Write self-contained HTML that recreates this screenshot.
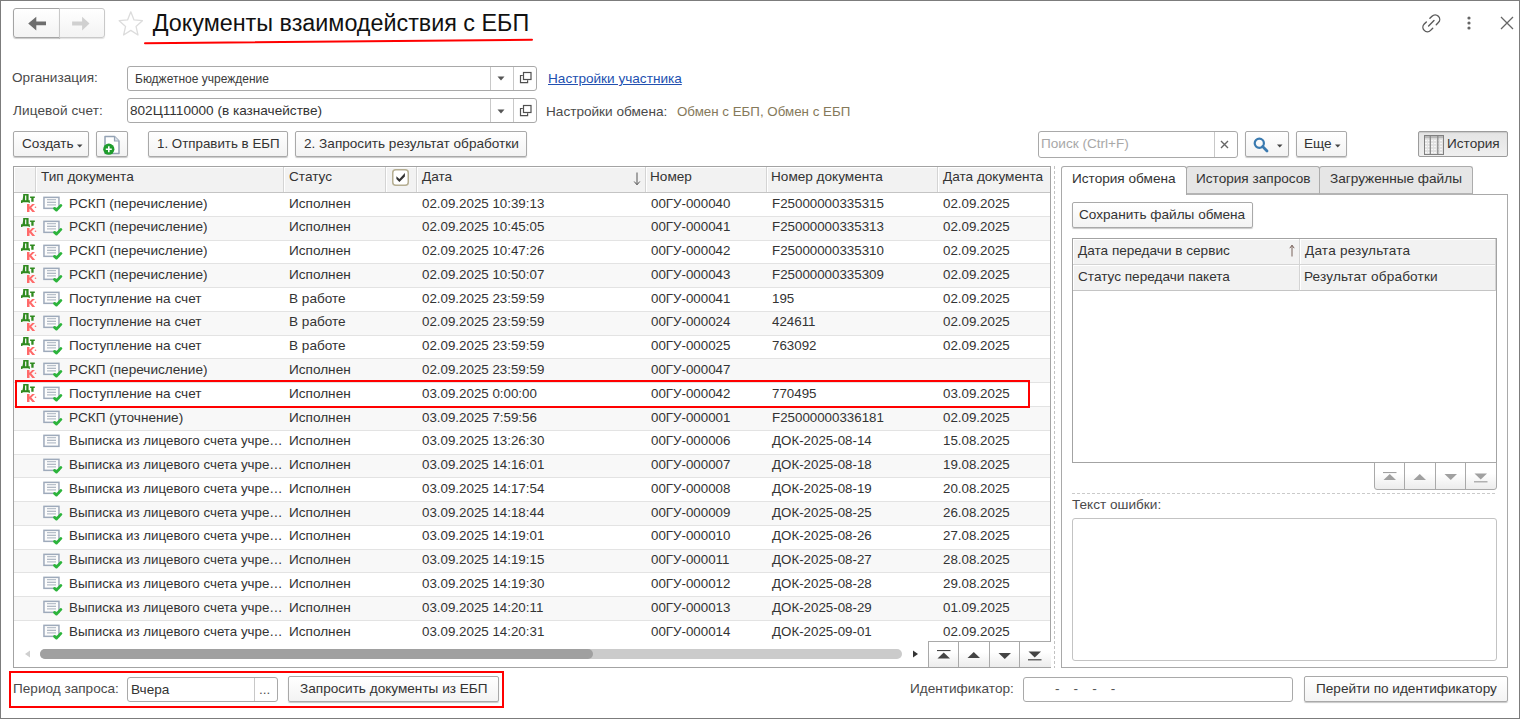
<!DOCTYPE html>
<html><head><meta charset="utf-8">
<style>
*{box-sizing:border-box;margin:0;padding:0}
html,body{width:1520px;height:719px;overflow:hidden;background:#fff}
body{position:relative;font-family:"Liberation Sans",sans-serif;font-size:13.6px;color:#333}
.n{font-size:13.33px}
.a{position:absolute}
.t{position:absolute;white-space:nowrap;line-height:16px}
.win{position:absolute;left:0;top:0;width:1520px;height:719px;border:1px solid #7c7c7c}
.btn{position:absolute;border:1px solid #a9a9a9;border-radius:2px;background:linear-gradient(#ffffff,#f3f3f3);box-shadow:0 1px 1px rgba(0,0,0,.22);white-space:nowrap;color:#333;line-height:16px}
.fld{position:absolute;border:1px solid #a9a9a9;border-radius:3px;background:#fff}
.row{position:absolute;left:14px;width:1036px;overflow:visible}
.row .c{position:absolute;top:2.5px;line-height:16px;white-space:nowrap;color:#333}
.row .dk{position:absolute;left:2px;top:-1px}
.row .di{position:absolute;left:28px;top:3px}
.hd{position:absolute;top:167px;height:25px;background:#f2f2f2;border-right:1px solid #d4d4d4;box-shadow:inset 1px 1px 0 #fff}
.hd span{position:absolute;left:5px;top:2px;line-height:16px;white-space:nowrap;color:#333}
.nb{position:absolute;border:1px solid #a9a9a9;background:linear-gradient(#fff 40%,#ececec);}
</style></head><body>
<div class="win"></div>

<!-- nav back/forward -->
<div class="btn" style="left:13px;top:8px;width:47px;height:30px;border-color:#a4a4a4;border-radius:3px 0 0 3px"></div>
<div class="btn" style="left:59px;top:8px;width:46px;height:30px;border-color:#c9c9c9;border-radius:0 3px 3px 0;box-shadow:0 1px 1px rgba(0,0,0,.12)"></div>
<svg class="a" style="left:28px;top:16px" width="19" height="16" viewBox="0 0 19 16"><path d="M0.2 7.6L8.3 0.8V5.6H18V9.3H8.3V14.5Z" fill="#6e6e6e"/></svg>
<svg class="a" style="left:72px;top:16px" width="19" height="16" viewBox="0 0 19 16"><path d="M17.5 7.6L10.1 0.8V5.6H0.1V9.5H10.1V14.5Z" fill="#d0d0d0"/></svg>
<!-- star -->
<svg class="a" style="left:118px;top:11px" width="26" height="26" viewBox="0 0 26 26"><path d="M12.80 0.80 L16.03 8.95 L24.40 9.66 L18.03 15.41 L19.97 24.00 L12.80 19.41 L5.63 24.00 L7.57 15.41 L1.20 9.66 L9.57 8.95Z" fill="none" stroke="#dcdcdc" stroke-width="1.3" stroke-linejoin="round"/></svg>
<!-- title -->
<div class="t" style="left:152.8px;top:9px;font-size:23.33px;line-height:28px;color:#111">Документы взаимодействия с ЕБП</div>
<svg class="a" style="left:0;top:0" width="600" height="50"><path d="M145 43.2 C 300 42, 420 40.5, 532 39.8" fill="none" stroke="#ff0000" stroke-width="2" stroke-linecap="round"/></svg>
<!-- top right icons -->
<svg class="a" style="left:1420px;top:12px" width="24" height="24" viewBox="0 0 24 24"><g transform="translate(11.3 11.3) rotate(-45)" fill="none" stroke="#5a5a5a" stroke-width="1.4" stroke-linecap="round"><path d="M2.5 -4.5H5.5A4.5 4.5 0 0 1 5.5 4.5H2.5"/><path d="M-2.5 -4.5H-5.5A4.5 4.5 0 0 0 -5.5 4.5H-2.5"/><path d="M-3.8 0H3.8"/></g></svg>
<svg class="a" style="left:1464px;top:14px" width="10" height="18"><circle cx="5" cy="4" r="1.6" fill="#666"/><circle cx="5" cy="9" r="1.6" fill="#666"/><circle cx="5" cy="14" r="1.6" fill="#666"/></svg>
<svg class="a" style="left:1499px;top:15px" width="16" height="16"><path d="M2 2L14 14M14 2L2 14" stroke="#666" stroke-width="1.3"/></svg>

<!-- form fields -->
<div class="t" style="left:12px;top:70px;color:#4a4a4a">Организация:</div>
<div class="fld" style="left:127px;top:66px;width:410px;height:25px"></div>
<div class="a" style="left:490px;top:67px;width:1px;height:23px;background:#c8c8c8"></div>
<div class="a" style="left:513px;top:67px;width:1px;height:23px;background:#c8c8c8"></div>
<div class="t" style="left:135px;top:70.5px;font-size:12px;color:#3a3a3a">Бюджетное учреждение</div>
<svg class="a" style="left:497px;top:76px" width="8" height="5"><path d="M0.5 0.5H7.5L4 4.5Z" fill="#555"/></svg>
<svg class="a" style="left:519px;top:71px" width="14" height="13" viewBox="0 0 14 13"><rect x="4.5" y="1.5" width="7.5" height="7" fill="none" stroke="#505050" stroke-width="1.2"/><path d="M3.8 4.5H1.5V11.6H8.6V9.2" fill="none" stroke="#505050" stroke-width="1.2"/></svg>

<div class="t" style="left:13px;top:103px;color:#4a4a4a;letter-spacing:.1px">Лицевой счет:</div>
<div class="fld" style="left:127px;top:98px;width:410px;height:25px"></div>
<div class="a" style="left:490px;top:99px;width:1px;height:23px;background:#c8c8c8"></div>
<div class="a" style="left:513px;top:99px;width:1px;height:23px;background:#c8c8c8"></div>
<div class="t" style="left:130px;top:103px;color:#333">802Ц1110000 (в казначействе)</div>
<svg class="a" style="left:497px;top:109px" width="8" height="5"><path d="M0.5 0.5H7.5L4 4.5Z" fill="#555"/></svg>
<svg class="a" style="left:519px;top:104px" width="14" height="13" viewBox="0 0 14 13"><rect x="4.5" y="1.5" width="7.5" height="7" fill="none" stroke="#505050" stroke-width="1.2"/><path d="M3.8 4.5H1.5V11.6H8.6V9.2" fill="none" stroke="#505050" stroke-width="1.2"/></svg>

<div class="t" style="left:548px;top:71px;color:#2250b0;text-decoration:underline">Настройки участника</div>
<div class="t" style="left:546px;top:104px;color:#4a4a4a">Настройки обмена:</div>
<div class="t" style="left:677px;top:104px;color:#85795a;font-size:13.33px">Обмен с ЕБП, Обмен с ЕБП</div>

<!-- toolbar -->
<div class="btn" style="left:13px;top:131px;width:76px;height:26px"><span class="a" style="left:8px;top:4px">Создать</span><svg class="a" style="left:63px;top:12px" width="6" height="4"><path d="M0 0.5H5.5L2.75 3.5Z" fill="#444"/></svg></div>
<div class="btn" style="left:96px;top:131px;width:32px;height:26px"></div>
<svg class="a" style="left:102px;top:135px" width="20" height="20" viewBox="0 0 20 20"><path d="M3 1.5H12.5L17 6V18.5H3Z" fill="#fff" stroke="#94a2b4" stroke-width="1.5" stroke-linejoin="round"/><path d="M12.5 1.5V6H17" fill="#dde3ea" stroke="#94a2b4" stroke-width="1.2"/><circle cx="6.8" cy="14.2" r="5.6" fill="#1f9d2d"/><path d="M6.8 11.2V17.2M3.8 14.2H9.8" stroke="#fff" stroke-width="1.6"/></svg>
<div class="btn" style="left:148px;top:131px;width:140px;height:26px"><span class="a" style="left:8px;top:4px;font-size:13.33px">1. Отправить в ЕБП</span></div>
<div class="btn" style="left:295px;top:131px;width:232px;height:26px"><span class="a" style="left:8px;top:4px">2. Запросить результат обработки</span></div>

<div class="fld" style="left:1038px;top:131px;width:200px;height:27px"></div>
<div class="a" style="left:1214px;top:132px;width:1px;height:25px;background:#c8c8c8"></div>
<div class="t" style="left:1041px;top:136px;color:#a8a8a8">Поиск (Ctrl+F)</div>
<svg class="a" style="left:1220px;top:140px" width="9" height="9"><path d="M1 1L8 8M8 1L1 8" stroke="#666" stroke-width="1.4"/></svg>
<div class="btn" style="left:1245px;top:131px;width:44px;height:26px"><svg class="a" style="left:7px;top:5px" width="16" height="16" viewBox="0 0 16 16"><circle cx="6.3" cy="6.3" r="4.6" fill="none" stroke="#3a7ab0" stroke-width="2.2"/><path d="M9.6 9.6L14 14" stroke="#3a7ab0" stroke-width="2.8" stroke-linecap="round"/></svg><svg class="a" style="left:31px;top:12px" width="6" height="4"><path d="M0 0.5H5.5L2.75 3.5Z" fill="#444"/></svg></div>
<div class="btn" style="left:1296px;top:131px;width:51px;height:26px"><span class="a" style="left:7px;top:4px">Еще</span><svg class="a" style="left:38px;top:12px" width="6" height="4"><path d="M0 0.5H5.5L2.75 3.5Z" fill="#444"/></svg></div>
<div class="btn" style="left:1418px;top:131px;width:90px;height:26px;background:linear-gradient(#e4e4e4,#efefef);border-color:#9c9c9c;box-shadow:inset 0 1px 1px rgba(0,0,0,.12)"><span class="a" style="left:28px;top:4px">История</span></div>
<svg class="a" style="left:1424px;top:135px" width="20" height="20" viewBox="0 0 20 20"><rect x="0.5" y="0.5" width="19" height="19" fill="#e2e2e2" stroke="#808080"/><rect x="1" y="1" width="18" height="2.2" fill="#b8b8b8"/><path d="M1 5.5H19M1 8.5H19M1 11.5H19M1 14.5H19M1 17.5H19" stroke="#f7f7f7" stroke-width="1.2" stroke-dasharray="2 1"/><path d="M6.3 1V19M13.8 1V19" stroke="#8a8a8a" stroke-width="1.3"/></svg>

<!-- left table -->
<div class="a" style="left:13px;top:166px;width:1038px;height:502px;border:1px solid #a3a3a3;background:#fff"></div>
<div class="hd" style="left:14px;width:22px"></div>
<div class="hd" style="left:36px;width:248px"><span>Тип документа</span></div>
<div class="hd" style="left:284px;width:102px"><span>Статус</span></div>
<div class="hd" style="left:386px;width:31px"></div>
<div class="hd" style="left:417px;width:229px"><span>Дата</span></div>
<div class="hd" style="left:646px;width:121px"><span style="left:4px">Номер</span></div>
<div class="hd" style="left:767px;width:171px"><span style="left:4px">Номер документа</span></div>
<div class="hd" style="left:938px;width:112px;border-right:none"><span>Дата документа</span></div>
<div class="a" style="left:14px;top:192px;width:1036px;height:1px;background:#c4c4c4"></div>
<svg class="a" style="left:392px;top:169px" width="17" height="17" viewBox="0 0 17 17"><rect x="0.75" y="0.75" width="15.5" height="15.5" rx="3" fill="#fff" stroke="#b5ae92" stroke-width="1.5"/><path d="M4.4 7.3L7.4 10L12.9 4V7.4L7.4 12.9L4.4 10.1Z" fill="#333"/></svg>
<svg class="a" style="left:633px;top:172px" width="8" height="14"><path d="M4 0.5V12.5M1.2 9.5L4 12.8L6.8 9.5" fill="none" stroke="#555" stroke-width="1"/></svg>

<div class="row" style="top:193px;height:23px;background:#fff"><div class="a" style="left:0;top:0.00px;width:1036px;height:24px"><svg class="dk" width="22" height="22" viewBox="0 0 22 22"><path fill="#2f8a1f" fill-rule="evenodd" d="M7.2 2.1H12.6V8.2H13.8V10.9H12.7V10.3H6.5V11H5V8.2H6.4C7 6.5 7.2 4.5 7.2 2.1ZM9.1 3.5V8.2H10.3V3.5Z"/><path fill="#2f8a1f" d="M14.1 4.6H18.8V6.1H17.6V9.8H15.3V6.1H14.1Z"/><path fill="#ff6a6a" d="M11 11.9H13.5V14.7L16.2 11.9H19L15.3 15.4L19.2 19.9H16.3L13.5 16.6V19.9H11Z"/><circle cx="19.5" cy="15.3" r="0.8" fill="#ff6a6a"/></svg><svg class="di" width="22" height="18" viewBox="0 0 22 18"><rect x="1.95" y="1.35" width="15" height="11" fill="#fcfcfc" stroke="#9eaabb" stroke-width="1.5"/><path d="M5 3.7h9M5 8.8h9" stroke="#b8c0ca" stroke-width="1.3"/><path d="M5 6.3h9" stroke="#a9b2be" stroke-width="1.2"/><path d="M12.5 12.4L14.5 14.1L18.9 9.4" fill="none" stroke="#2cb43b" stroke-width="2.8" stroke-linecap="round" stroke-linejoin="round"/></svg><span class="c" style="left:55px">РСКП (перечисление)</span><span class="c" style="left:275px">Исполнен</span><span class="c n" style="left:408px">02.09.2025 10:39:13</span><span class="c n" style="left:637px">00ГУ-000040</span><span class="c n" style="left:758px">F25000000335315</span><span class="c n" style="left:929px">02.09.2025</span></div></div><div class="a" style="left:14px;top:216px;width:1036px;height:1px;background:#e3e3e3"></div>
<div class="row" style="top:217px;height:23px;background:#f8f8f8"><div class="a" style="left:0;top:-0.22px;width:1036px;height:24px"><svg class="dk" width="22" height="22" viewBox="0 0 22 22"><path fill="#2f8a1f" fill-rule="evenodd" d="M7.2 2.1H12.6V8.2H13.8V10.9H12.7V10.3H6.5V11H5V8.2H6.4C7 6.5 7.2 4.5 7.2 2.1ZM9.1 3.5V8.2H10.3V3.5Z"/><path fill="#2f8a1f" d="M14.1 4.6H18.8V6.1H17.6V9.8H15.3V6.1H14.1Z"/><path fill="#ff6a6a" d="M11 11.9H13.5V14.7L16.2 11.9H19L15.3 15.4L19.2 19.9H16.3L13.5 16.6V19.9H11Z"/><circle cx="19.5" cy="15.3" r="0.8" fill="#ff6a6a"/></svg><svg class="di" width="22" height="18" viewBox="0 0 22 18"><rect x="1.95" y="1.35" width="15" height="11" fill="#fcfcfc" stroke="#9eaabb" stroke-width="1.5"/><path d="M5 3.7h9M5 8.8h9" stroke="#b8c0ca" stroke-width="1.3"/><path d="M5 6.3h9" stroke="#a9b2be" stroke-width="1.2"/><path d="M12.5 12.4L14.5 14.1L18.9 9.4" fill="none" stroke="#2cb43b" stroke-width="2.8" stroke-linecap="round" stroke-linejoin="round"/></svg><span class="c" style="left:55px">РСКП (перечисление)</span><span class="c" style="left:275px">Исполнен</span><span class="c n" style="left:408px">02.09.2025 10:45:05</span><span class="c n" style="left:637px">00ГУ-000041</span><span class="c n" style="left:758px">F25000000335313</span><span class="c n" style="left:929px">02.09.2025</span></div></div><div class="a" style="left:14px;top:240px;width:1036px;height:1px;background:#e3e3e3"></div>
<div class="row" style="top:241px;height:22px;background:#fff"><div class="a" style="left:0;top:-0.44px;width:1036px;height:24px"><svg class="dk" width="22" height="22" viewBox="0 0 22 22"><path fill="#2f8a1f" fill-rule="evenodd" d="M7.2 2.1H12.6V8.2H13.8V10.9H12.7V10.3H6.5V11H5V8.2H6.4C7 6.5 7.2 4.5 7.2 2.1ZM9.1 3.5V8.2H10.3V3.5Z"/><path fill="#2f8a1f" d="M14.1 4.6H18.8V6.1H17.6V9.8H15.3V6.1H14.1Z"/><path fill="#ff6a6a" d="M11 11.9H13.5V14.7L16.2 11.9H19L15.3 15.4L19.2 19.9H16.3L13.5 16.6V19.9H11Z"/><circle cx="19.5" cy="15.3" r="0.8" fill="#ff6a6a"/></svg><svg class="di" width="22" height="18" viewBox="0 0 22 18"><rect x="1.95" y="1.35" width="15" height="11" fill="#fcfcfc" stroke="#9eaabb" stroke-width="1.5"/><path d="M5 3.7h9M5 8.8h9" stroke="#b8c0ca" stroke-width="1.3"/><path d="M5 6.3h9" stroke="#a9b2be" stroke-width="1.2"/><path d="M12.5 12.4L14.5 14.1L18.9 9.4" fill="none" stroke="#2cb43b" stroke-width="2.8" stroke-linecap="round" stroke-linejoin="round"/></svg><span class="c" style="left:55px">РСКП (перечисление)</span><span class="c" style="left:275px">Исполнен</span><span class="c n" style="left:408px">02.09.2025 10:47:26</span><span class="c n" style="left:637px">00ГУ-000042</span><span class="c n" style="left:758px">F25000000335310</span><span class="c n" style="left:929px">02.09.2025</span></div></div><div class="a" style="left:14px;top:263px;width:1036px;height:1px;background:#e3e3e3"></div>
<div class="row" style="top:264px;height:23px;background:#f8f8f8"><div class="a" style="left:0;top:0.34px;width:1036px;height:24px"><svg class="dk" width="22" height="22" viewBox="0 0 22 22"><path fill="#2f8a1f" fill-rule="evenodd" d="M7.2 2.1H12.6V8.2H13.8V10.9H12.7V10.3H6.5V11H5V8.2H6.4C7 6.5 7.2 4.5 7.2 2.1ZM9.1 3.5V8.2H10.3V3.5Z"/><path fill="#2f8a1f" d="M14.1 4.6H18.8V6.1H17.6V9.8H15.3V6.1H14.1Z"/><path fill="#ff6a6a" d="M11 11.9H13.5V14.7L16.2 11.9H19L15.3 15.4L19.2 19.9H16.3L13.5 16.6V19.9H11Z"/><circle cx="19.5" cy="15.3" r="0.8" fill="#ff6a6a"/></svg><svg class="di" width="22" height="18" viewBox="0 0 22 18"><rect x="1.95" y="1.35" width="15" height="11" fill="#fcfcfc" stroke="#9eaabb" stroke-width="1.5"/><path d="M5 3.7h9M5 8.8h9" stroke="#b8c0ca" stroke-width="1.3"/><path d="M5 6.3h9" stroke="#a9b2be" stroke-width="1.2"/><path d="M12.5 12.4L14.5 14.1L18.9 9.4" fill="none" stroke="#2cb43b" stroke-width="2.8" stroke-linecap="round" stroke-linejoin="round"/></svg><span class="c" style="left:55px">РСКП (перечисление)</span><span class="c" style="left:275px">Исполнен</span><span class="c n" style="left:408px">02.09.2025 10:50:07</span><span class="c n" style="left:637px">00ГУ-000043</span><span class="c n" style="left:758px">F25000000335309</span><span class="c n" style="left:929px">02.09.2025</span></div></div><div class="a" style="left:14px;top:287px;width:1036px;height:1px;background:#e3e3e3"></div>
<div class="row" style="top:288px;height:23px;background:#fff"><div class="a" style="left:0;top:0.12px;width:1036px;height:24px"><svg class="dk" width="22" height="22" viewBox="0 0 22 22"><path fill="#2f8a1f" fill-rule="evenodd" d="M7.2 2.1H12.6V8.2H13.8V10.9H12.7V10.3H6.5V11H5V8.2H6.4C7 6.5 7.2 4.5 7.2 2.1ZM9.1 3.5V8.2H10.3V3.5Z"/><path fill="#2f8a1f" d="M14.1 4.6H18.8V6.1H17.6V9.8H15.3V6.1H14.1Z"/><path fill="#ff6a6a" d="M11 11.9H13.5V14.7L16.2 11.9H19L15.3 15.4L19.2 19.9H16.3L13.5 16.6V19.9H11Z"/><circle cx="19.5" cy="15.3" r="0.8" fill="#ff6a6a"/></svg><svg class="di" width="22" height="18" viewBox="0 0 22 18"><rect x="1.95" y="1.35" width="15" height="11" fill="#fcfcfc" stroke="#9eaabb" stroke-width="1.5"/><path d="M5 3.7h9M5 8.8h9" stroke="#b8c0ca" stroke-width="1.3"/><path d="M5 6.3h9" stroke="#a9b2be" stroke-width="1.2"/><path d="M12.5 12.4L14.5 14.1L18.9 9.4" fill="none" stroke="#2cb43b" stroke-width="2.8" stroke-linecap="round" stroke-linejoin="round"/></svg><span class="c" style="left:55px">Поступление на счет</span><span class="c" style="left:275px">В работе</span><span class="c n" style="left:408px">02.09.2025 23:59:59</span><span class="c n" style="left:637px">00ГУ-000041</span><span class="c n" style="left:758px">195</span><span class="c n" style="left:929px">02.09.2025</span></div></div><div class="a" style="left:14px;top:311px;width:1036px;height:1px;background:#e3e3e3"></div>
<div class="row" style="top:312px;height:23px;background:#f8f8f8"><div class="a" style="left:0;top:-0.10px;width:1036px;height:24px"><svg class="dk" width="22" height="22" viewBox="0 0 22 22"><path fill="#2f8a1f" fill-rule="evenodd" d="M7.2 2.1H12.6V8.2H13.8V10.9H12.7V10.3H6.5V11H5V8.2H6.4C7 6.5 7.2 4.5 7.2 2.1ZM9.1 3.5V8.2H10.3V3.5Z"/><path fill="#2f8a1f" d="M14.1 4.6H18.8V6.1H17.6V9.8H15.3V6.1H14.1Z"/><path fill="#ff6a6a" d="M11 11.9H13.5V14.7L16.2 11.9H19L15.3 15.4L19.2 19.9H16.3L13.5 16.6V19.9H11Z"/><circle cx="19.5" cy="15.3" r="0.8" fill="#ff6a6a"/></svg><svg class="di" width="22" height="18" viewBox="0 0 22 18"><rect x="1.95" y="1.35" width="15" height="11" fill="#fcfcfc" stroke="#9eaabb" stroke-width="1.5"/><path d="M5 3.7h9M5 8.8h9" stroke="#b8c0ca" stroke-width="1.3"/><path d="M5 6.3h9" stroke="#a9b2be" stroke-width="1.2"/><path d="M12.5 12.4L14.5 14.1L18.9 9.4" fill="none" stroke="#2cb43b" stroke-width="2.8" stroke-linecap="round" stroke-linejoin="round"/></svg><span class="c" style="left:55px">Поступление на счет</span><span class="c" style="left:275px">В работе</span><span class="c n" style="left:408px">02.09.2025 23:59:59</span><span class="c n" style="left:637px">00ГУ-000024</span><span class="c n" style="left:758px">424611</span><span class="c n" style="left:929px">02.09.2025</span></div></div><div class="a" style="left:14px;top:335px;width:1036px;height:1px;background:#e3e3e3"></div>
<div class="row" style="top:336px;height:22px;background:#fff"><div class="a" style="left:0;top:-0.32px;width:1036px;height:24px"><svg class="dk" width="22" height="22" viewBox="0 0 22 22"><path fill="#2f8a1f" fill-rule="evenodd" d="M7.2 2.1H12.6V8.2H13.8V10.9H12.7V10.3H6.5V11H5V8.2H6.4C7 6.5 7.2 4.5 7.2 2.1ZM9.1 3.5V8.2H10.3V3.5Z"/><path fill="#2f8a1f" d="M14.1 4.6H18.8V6.1H17.6V9.8H15.3V6.1H14.1Z"/><path fill="#ff6a6a" d="M11 11.9H13.5V14.7L16.2 11.9H19L15.3 15.4L19.2 19.9H16.3L13.5 16.6V19.9H11Z"/><circle cx="19.5" cy="15.3" r="0.8" fill="#ff6a6a"/></svg><svg class="di" width="22" height="18" viewBox="0 0 22 18"><rect x="1.95" y="1.35" width="15" height="11" fill="#fcfcfc" stroke="#9eaabb" stroke-width="1.5"/><path d="M5 3.7h9M5 8.8h9" stroke="#b8c0ca" stroke-width="1.3"/><path d="M5 6.3h9" stroke="#a9b2be" stroke-width="1.2"/><path d="M12.5 12.4L14.5 14.1L18.9 9.4" fill="none" stroke="#2cb43b" stroke-width="2.8" stroke-linecap="round" stroke-linejoin="round"/></svg><span class="c" style="left:55px">Поступление на счет</span><span class="c" style="left:275px">В работе</span><span class="c n" style="left:408px">02.09.2025 23:59:59</span><span class="c n" style="left:637px">00ГУ-000025</span><span class="c n" style="left:758px">763092</span><span class="c n" style="left:929px">02.09.2025</span></div></div><div class="a" style="left:14px;top:358px;width:1036px;height:1px;background:#e3e3e3"></div>
<div class="row" style="top:359px;height:23px;background:#f8f8f8"><div class="a" style="left:0;top:0.46px;width:1036px;height:24px"><svg class="dk" width="22" height="22" viewBox="0 0 22 22"><path fill="#2f8a1f" fill-rule="evenodd" d="M7.2 2.1H12.6V8.2H13.8V10.9H12.7V10.3H6.5V11H5V8.2H6.4C7 6.5 7.2 4.5 7.2 2.1ZM9.1 3.5V8.2H10.3V3.5Z"/><path fill="#2f8a1f" d="M14.1 4.6H18.8V6.1H17.6V9.8H15.3V6.1H14.1Z"/><path fill="#ff6a6a" d="M11 11.9H13.5V14.7L16.2 11.9H19L15.3 15.4L19.2 19.9H16.3L13.5 16.6V19.9H11Z"/><circle cx="19.5" cy="15.3" r="0.8" fill="#ff6a6a"/></svg><svg class="di" width="22" height="18" viewBox="0 0 22 18"><rect x="1.95" y="1.35" width="15" height="11" fill="#fcfcfc" stroke="#9eaabb" stroke-width="1.5"/><path d="M5 3.7h9M5 8.8h9" stroke="#b8c0ca" stroke-width="1.3"/><path d="M5 6.3h9" stroke="#a9b2be" stroke-width="1.2"/><path d="M12.5 12.4L14.5 14.1L18.9 9.4" fill="none" stroke="#2cb43b" stroke-width="2.8" stroke-linecap="round" stroke-linejoin="round"/></svg><span class="c" style="left:55px">РСКП (перечисление)</span><span class="c" style="left:275px">Исполнен</span><span class="c n" style="left:408px">02.09.2025 23:59:59</span><span class="c n" style="left:637px">00ГУ-000047</span><span class="c n" style="left:758px"></span><span class="c n" style="left:929px"></span></div></div><div class="a" style="left:14px;top:382px;width:1036px;height:1px;background:#e3e3e3"></div>
<div class="row" style="top:383px;height:23px;background:#fff"><div class="a" style="left:0;top:0.24px;width:1036px;height:24px"><svg class="dk" width="22" height="22" viewBox="0 0 22 22"><path fill="#2f8a1f" fill-rule="evenodd" d="M7.2 2.1H12.6V8.2H13.8V10.9H12.7V10.3H6.5V11H5V8.2H6.4C7 6.5 7.2 4.5 7.2 2.1ZM9.1 3.5V8.2H10.3V3.5Z"/><path fill="#2f8a1f" d="M14.1 4.6H18.8V6.1H17.6V9.8H15.3V6.1H14.1Z"/><path fill="#ff6a6a" d="M11 11.9H13.5V14.7L16.2 11.9H19L15.3 15.4L19.2 19.9H16.3L13.5 16.6V19.9H11Z"/><circle cx="19.5" cy="15.3" r="0.8" fill="#ff6a6a"/></svg><svg class="di" width="22" height="18" viewBox="0 0 22 18"><rect x="1.95" y="1.35" width="15" height="11" fill="#fcfcfc" stroke="#9eaabb" stroke-width="1.5"/><path d="M5 3.7h9M5 8.8h9" stroke="#b8c0ca" stroke-width="1.3"/><path d="M5 6.3h9" stroke="#a9b2be" stroke-width="1.2"/><path d="M12.5 12.4L14.5 14.1L18.9 9.4" fill="none" stroke="#2cb43b" stroke-width="2.8" stroke-linecap="round" stroke-linejoin="round"/></svg><span class="c" style="left:55px">Поступление на счет</span><span class="c" style="left:275px">Исполнен</span><span class="c n" style="left:408px">03.09.2025 0:00:00</span><span class="c n" style="left:637px">00ГУ-000042</span><span class="c n" style="left:758px">770495</span><span class="c n" style="left:929px">03.09.2025</span></div></div><div class="a" style="left:14px;top:406px;width:1036px;height:1px;background:#e3e3e3"></div>
<div class="row" style="top:407px;height:23px;background:#f8f8f8"><div class="a" style="left:0;top:0.02px;width:1036px;height:24px"><svg class="di" width="22" height="18" viewBox="0 0 22 18"><rect x="1.95" y="1.35" width="15" height="11" fill="#fcfcfc" stroke="#9eaabb" stroke-width="1.5"/><path d="M5 3.7h9M5 8.8h9" stroke="#b8c0ca" stroke-width="1.3"/><path d="M5 6.3h9" stroke="#a9b2be" stroke-width="1.2"/><path d="M12.5 12.4L14.5 14.1L18.9 9.4" fill="none" stroke="#2cb43b" stroke-width="2.8" stroke-linecap="round" stroke-linejoin="round"/></svg><span class="c" style="left:55px">РСКП (уточнение)</span><span class="c" style="left:275px">Исполнен</span><span class="c n" style="left:408px">03.09.2025 7:59:56</span><span class="c n" style="left:637px">00ГУ-000001</span><span class="c n" style="left:758px">F25000000336181</span><span class="c n" style="left:929px">02.09.2025</span></div></div><div class="a" style="left:14px;top:430px;width:1036px;height:1px;background:#e3e3e3"></div>
<div class="row" style="top:431px;height:23px;background:#fff"><div class="a" style="left:0;top:-0.20px;width:1036px;height:24px"><svg class="di" width="22" height="18" viewBox="0 0 22 18"><rect x="1.95" y="1.35" width="15" height="11" fill="#fcfcfc" stroke="#9eaabb" stroke-width="1.5"/><path d="M5 3.7h9M5 8.8h9" stroke="#b8c0ca" stroke-width="1.3"/><path d="M5 6.3h9" stroke="#a9b2be" stroke-width="1.2"/></svg><span class="c n" style="left:55px">Выписка из лицевого счета учре…</span><span class="c" style="left:275px">Исполнен</span><span class="c n" style="left:408px">03.09.2025 13:26:30</span><span class="c n" style="left:637px">00ГУ-000006</span><span class="c n" style="left:758px">ДОК-2025-08-14</span><span class="c n" style="left:929px">15.08.2025</span></div></div><div class="a" style="left:14px;top:454px;width:1036px;height:1px;background:#e3e3e3"></div>
<div class="row" style="top:455px;height:22px;background:#f8f8f8"><div class="a" style="left:0;top:-0.42px;width:1036px;height:24px"><svg class="di" width="22" height="18" viewBox="0 0 22 18"><rect x="1.95" y="1.35" width="15" height="11" fill="#fcfcfc" stroke="#9eaabb" stroke-width="1.5"/><path d="M5 3.7h9M5 8.8h9" stroke="#b8c0ca" stroke-width="1.3"/><path d="M5 6.3h9" stroke="#a9b2be" stroke-width="1.2"/><path d="M12.5 12.4L14.5 14.1L18.9 9.4" fill="none" stroke="#2cb43b" stroke-width="2.8" stroke-linecap="round" stroke-linejoin="round"/></svg><span class="c n" style="left:55px">Выписка из лицевого счета учре…</span><span class="c" style="left:275px">Исполнен</span><span class="c n" style="left:408px">03.09.2025 14:16:01</span><span class="c n" style="left:637px">00ГУ-000007</span><span class="c n" style="left:758px">ДОК-2025-08-18</span><span class="c n" style="left:929px">19.08.2025</span></div></div><div class="a" style="left:14px;top:477px;width:1036px;height:1px;background:#e3e3e3"></div>
<div class="row" style="top:478px;height:23px;background:#fff"><div class="a" style="left:0;top:0.36px;width:1036px;height:24px"><svg class="di" width="22" height="18" viewBox="0 0 22 18"><rect x="1.95" y="1.35" width="15" height="11" fill="#fcfcfc" stroke="#9eaabb" stroke-width="1.5"/><path d="M5 3.7h9M5 8.8h9" stroke="#b8c0ca" stroke-width="1.3"/><path d="M5 6.3h9" stroke="#a9b2be" stroke-width="1.2"/><path d="M12.5 12.4L14.5 14.1L18.9 9.4" fill="none" stroke="#2cb43b" stroke-width="2.8" stroke-linecap="round" stroke-linejoin="round"/></svg><span class="c n" style="left:55px">Выписка из лицевого счета учре…</span><span class="c" style="left:275px">Исполнен</span><span class="c n" style="left:408px">03.09.2025 14:17:54</span><span class="c n" style="left:637px">00ГУ-000008</span><span class="c n" style="left:758px">ДОК-2025-08-19</span><span class="c n" style="left:929px">20.08.2025</span></div></div><div class="a" style="left:14px;top:501px;width:1036px;height:1px;background:#e3e3e3"></div>
<div class="row" style="top:502px;height:23px;background:#f8f8f8"><div class="a" style="left:0;top:0.14px;width:1036px;height:24px"><svg class="di" width="22" height="18" viewBox="0 0 22 18"><rect x="1.95" y="1.35" width="15" height="11" fill="#fcfcfc" stroke="#9eaabb" stroke-width="1.5"/><path d="M5 3.7h9M5 8.8h9" stroke="#b8c0ca" stroke-width="1.3"/><path d="M5 6.3h9" stroke="#a9b2be" stroke-width="1.2"/><path d="M12.5 12.4L14.5 14.1L18.9 9.4" fill="none" stroke="#2cb43b" stroke-width="2.8" stroke-linecap="round" stroke-linejoin="round"/></svg><span class="c n" style="left:55px">Выписка из лицевого счета учре…</span><span class="c" style="left:275px">Исполнен</span><span class="c n" style="left:408px">03.09.2025 14:18:44</span><span class="c n" style="left:637px">00ГУ-000009</span><span class="c n" style="left:758px">ДОК-2025-08-25</span><span class="c n" style="left:929px">26.08.2025</span></div></div><div class="a" style="left:14px;top:525px;width:1036px;height:1px;background:#e3e3e3"></div>
<div class="row" style="top:526px;height:23px;background:#fff"><div class="a" style="left:0;top:-0.08px;width:1036px;height:24px"><svg class="di" width="22" height="18" viewBox="0 0 22 18"><rect x="1.95" y="1.35" width="15" height="11" fill="#fcfcfc" stroke="#9eaabb" stroke-width="1.5"/><path d="M5 3.7h9M5 8.8h9" stroke="#b8c0ca" stroke-width="1.3"/><path d="M5 6.3h9" stroke="#a9b2be" stroke-width="1.2"/><path d="M12.5 12.4L14.5 14.1L18.9 9.4" fill="none" stroke="#2cb43b" stroke-width="2.8" stroke-linecap="round" stroke-linejoin="round"/></svg><span class="c n" style="left:55px">Выписка из лицевого счета учре…</span><span class="c" style="left:275px">Исполнен</span><span class="c n" style="left:408px">03.09.2025 14:19:01</span><span class="c n" style="left:637px">00ГУ-000010</span><span class="c n" style="left:758px">ДОК-2025-08-26</span><span class="c n" style="left:929px">27.08.2025</span></div></div><div class="a" style="left:14px;top:549px;width:1036px;height:1px;background:#e3e3e3"></div>
<div class="row" style="top:550px;height:22px;background:#f8f8f8"><div class="a" style="left:0;top:-0.30px;width:1036px;height:24px"><svg class="di" width="22" height="18" viewBox="0 0 22 18"><rect x="1.95" y="1.35" width="15" height="11" fill="#fcfcfc" stroke="#9eaabb" stroke-width="1.5"/><path d="M5 3.7h9M5 8.8h9" stroke="#b8c0ca" stroke-width="1.3"/><path d="M5 6.3h9" stroke="#a9b2be" stroke-width="1.2"/><path d="M12.5 12.4L14.5 14.1L18.9 9.4" fill="none" stroke="#2cb43b" stroke-width="2.8" stroke-linecap="round" stroke-linejoin="round"/></svg><span class="c n" style="left:55px">Выписка из лицевого счета учре…</span><span class="c" style="left:275px">Исполнен</span><span class="c n" style="left:408px">03.09.2025 14:19:15</span><span class="c n" style="left:637px">00ГУ-000011</span><span class="c n" style="left:758px">ДОК-2025-08-27</span><span class="c n" style="left:929px">28.08.2025</span></div></div><div class="a" style="left:14px;top:572px;width:1036px;height:1px;background:#e3e3e3"></div>
<div class="row" style="top:573px;height:23px;background:#fff"><div class="a" style="left:0;top:0.48px;width:1036px;height:24px"><svg class="di" width="22" height="18" viewBox="0 0 22 18"><rect x="1.95" y="1.35" width="15" height="11" fill="#fcfcfc" stroke="#9eaabb" stroke-width="1.5"/><path d="M5 3.7h9M5 8.8h9" stroke="#b8c0ca" stroke-width="1.3"/><path d="M5 6.3h9" stroke="#a9b2be" stroke-width="1.2"/><path d="M12.5 12.4L14.5 14.1L18.9 9.4" fill="none" stroke="#2cb43b" stroke-width="2.8" stroke-linecap="round" stroke-linejoin="round"/></svg><span class="c n" style="left:55px">Выписка из лицевого счета учре…</span><span class="c" style="left:275px">Исполнен</span><span class="c n" style="left:408px">03.09.2025 14:19:30</span><span class="c n" style="left:637px">00ГУ-000012</span><span class="c n" style="left:758px">ДОК-2025-08-28</span><span class="c n" style="left:929px">29.08.2025</span></div></div><div class="a" style="left:14px;top:596px;width:1036px;height:1px;background:#e3e3e3"></div>
<div class="row" style="top:597px;height:23px;background:#f8f8f8"><div class="a" style="left:0;top:0.26px;width:1036px;height:24px"><svg class="di" width="22" height="18" viewBox="0 0 22 18"><rect x="1.95" y="1.35" width="15" height="11" fill="#fcfcfc" stroke="#9eaabb" stroke-width="1.5"/><path d="M5 3.7h9M5 8.8h9" stroke="#b8c0ca" stroke-width="1.3"/><path d="M5 6.3h9" stroke="#a9b2be" stroke-width="1.2"/><path d="M12.5 12.4L14.5 14.1L18.9 9.4" fill="none" stroke="#2cb43b" stroke-width="2.8" stroke-linecap="round" stroke-linejoin="round"/></svg><span class="c n" style="left:55px">Выписка из лицевого счета учре…</span><span class="c" style="left:275px">Исполнен</span><span class="c n" style="left:408px">03.09.2025 14:20:11</span><span class="c n" style="left:637px">00ГУ-000013</span><span class="c n" style="left:758px">ДОК-2025-08-29</span><span class="c n" style="left:929px">01.09.2025</span></div></div><div class="a" style="left:14px;top:620px;width:1036px;height:1px;background:#e3e3e3"></div>
<div class="row" style="top:621px;height:24px;background:#fff"><div class="a" style="left:0;top:0.04px;width:1036px;height:24px"><svg class="di" width="22" height="18" viewBox="0 0 22 18"><rect x="1.95" y="1.35" width="15" height="11" fill="#fcfcfc" stroke="#9eaabb" stroke-width="1.5"/><path d="M5 3.7h9M5 8.8h9" stroke="#b8c0ca" stroke-width="1.3"/><path d="M5 6.3h9" stroke="#a9b2be" stroke-width="1.2"/><path d="M12.5 12.4L14.5 14.1L18.9 9.4" fill="none" stroke="#2cb43b" stroke-width="2.8" stroke-linecap="round" stroke-linejoin="round"/></svg><span class="c n" style="left:55px">Выписка из лицевого счета учре…</span><span class="c" style="left:275px">Исполнен</span><span class="c n" style="left:408px">03.09.2025 14:20:31</span><span class="c n" style="left:637px">00ГУ-000014</span><span class="c n" style="left:758px">ДОК-2025-09-01</span><span class="c n" style="left:929px">02.09.2025</span></div></div>

<!-- bottom of table: scrollbar + nav -->
<div class="a" style="left:14px;top:644px;width:1036px;height:23px;background:#fff"></div>
<svg class="a" style="left:24px;top:650px" width="8" height="8"><path d="M6 0.5V7.5L1 4Z" fill="#cfcfcf"/></svg>
<div class="a" style="left:40px;top:649px;width:862px;height:10px;border-radius:5px;background:#cbcbcb"></div>
<div class="a" style="left:40px;top:649px;width:553px;height:10px;border-radius:5px;background:#a0a0a0"></div>
<svg class="a" style="left:912px;top:650px" width="8" height="8"><path d="M1 0.5V7.5L6 4Z" fill="#333"/></svg>
<div class="nb" style="left:928px;top:641px;width:31px;height:26px;border-bottom:none"></div>
<div class="nb" style="left:958px;top:641px;width:32px;height:26px;border-bottom:none"></div>
<div class="nb" style="left:989px;top:641px;width:31px;height:26px;border-bottom:none"></div>
<div class="nb" style="left:1019px;top:641px;width:32px;height:26px;border-bottom:none;border-right:none"></div>
<svg class="a" style="left:937px;top:650px" width="14" height="9"><path d="M0 0.5H13.5" stroke="#444" stroke-width="1.2"/><path d="M0.5 8.5L6.75 2.5L13 8.5Z" fill="#444"/></svg>
<svg class="a" style="left:967px;top:651px" width="14" height="8"><path d="M0.5 7L6.75 1L13 7Z" fill="#444"/></svg>
<svg class="a" style="left:998px;top:652px" width="14" height="8"><path d="M0.5 1L6.75 7L13 1Z" fill="#444"/></svg>
<svg class="a" style="left:1028px;top:651px" width="14" height="10"><path d="M0.5 0.5L6.75 6.5L13 0.5Z" fill="#444"/><path d="M0 8.8H13.5" stroke="#444" stroke-width="1.2"/></svg>

<!-- vertical dashed splitter -->
<div class="a" style="left:1054px;top:166px;width:1px;height:502px;background:repeating-linear-gradient(#c2c2c2 0 3px,transparent 3px 5px)"></div>

<!-- right panel tabs -->
<div class="a" style="left:1061px;top:194px;width:447px;height:474px;border:1px solid #a9a9a9;border-top-color:#a9a9a9"></div>
<div class="a" style="left:1186px;top:166px;width:134px;height:29px;border:1px solid #acacac;border-bottom:2px solid #b4b4b4;border-radius:3px 3px 0 0;background:#e6e6e6"></div>
<div class="a" style="left:1319px;top:166px;width:154px;height:29px;border:1px solid #acacac;border-bottom:2px solid #b4b4b4;border-radius:3px 3px 0 0;background:#e6e6e6"></div>
<div class="a" style="left:1061px;top:166px;width:126px;height:29px;border:1px solid #a9a9a9;border-bottom:none;border-radius:3px 3px 0 0;background:#fff"></div>
<div class="t" style="left:1072px;top:171px">История обмена</div>
<div class="t" style="left:1196px;top:171px">История запросов</div>
<div class="t" style="left:1330px;top:171px">Загруженные файлы</div>

<div class="btn" style="left:1072px;top:202px;width:181px;height:26px"><span class="a" style="left:6px;top:4px">Сохранить файлы обмена</span></div>

<div class="a" style="left:1072px;top:238px;width:425px;height:225px;border:1px solid #a3a3a3;background:#fff"></div>
<div class="hd" style="left:1073px;top:239px;width:227px;height:26px;border-bottom:1px solid #d4d4d4"><span style="top:4px">Дата передачи в сервис</span></div>
<div class="hd" style="left:1300px;top:239px;width:196px;height:26px;border-bottom:1px solid #d4d4d4"><span style="top:4px;letter-spacing:.2px">Дата результата</span></div>
<div class="hd" style="left:1073px;top:265px;width:227px;height:26px;border-bottom:1px solid #c4c4c4"><span style="top:4px">Статус передачи пакета</span></div>
<div class="hd" style="left:1300px;top:265px;width:196px;height:26px;border-bottom:1px solid #c4c4c4"><span style="top:4px;left:4px;letter-spacing:.15px">Результат обработки</span></div>
<svg class="a" style="left:1288px;top:244px" width="8" height="14"><path d="M4 12.5V1.5M1.8 4.2L4 1.2L6.2 4.2" fill="none" stroke="#6a5048" stroke-width="0.9"/></svg>

<div class="nb" style="left:1374px;top:462px;width:31px;height:28px;border-radius:0 0 0 3px"></div>
<div class="nb" style="left:1404px;top:462px;width:32px;height:28px"></div>
<div class="nb" style="left:1435px;top:462px;width:31px;height:28px"></div>
<div class="nb" style="left:1465px;top:462px;width:32px;height:28px;border-radius:0 0 3px 0"></div>
<svg class="a" style="left:1383px;top:472px" width="14" height="9"><path d="M0 0.5H13.5" stroke="#a0a0a0" stroke-width="1.2"/><path d="M0.5 8L6.75 2L13 8Z" fill="#a0a0a0"/></svg>
<svg class="a" style="left:1413px;top:473px" width="14" height="8"><path d="M0.5 7L6.75 1L13 7Z" fill="#a0a0a0"/></svg>
<svg class="a" style="left:1444px;top:473px" width="14" height="8"><path d="M0.5 1L6.75 7L13 1Z" fill="#a0a0a0"/></svg>
<svg class="a" style="left:1474px;top:473px" width="14" height="10"><path d="M0.5 0.5L6.75 6.5L13 0.5Z" fill="#a0a0a0"/><path d="M0 8.8H13.5" stroke="#a0a0a0" stroke-width="1.2"/></svg>

<div class="a" style="left:1072px;top:493px;width:425px;height:1px;background:repeating-linear-gradient(90deg,#cacaca 0 3px,transparent 3px 5px)"></div>
<div class="t" style="left:1072px;top:497px;color:#4a4a4a">Текст ошибки:</div>
<div class="fld" style="left:1072px;top:518px;width:425px;height:143px;border-color:#c3c3c3"></div>

<!-- bottom -->
<div class="a" style="left:9px;top:671px;width:495px;height:37px;border:2px solid #ff0000"></div>
<div class="t" style="left:13px;top:681px;color:#4a4a4a">Период запроса:</div>
<div class="fld" style="left:127px;top:677px;width:151px;height:25px"></div>
<div class="a" style="left:254px;top:678px;width:1px;height:23px;background:#c8c8c8"></div>
<div class="t" style="left:131px;top:682px">Вчера</div>
<div class="t" style="left:259px;top:682px;color:#555">...</div>
<div class="btn" style="left:288px;top:676px;width:211px;height:26px"><span class="a" style="left:11px;top:4px">Запросить документы из ЕБП</span></div>

<div class="t" style="left:910px;top:681px;color:#4a4a4a">Идентификатор:</div>
<div class="fld" style="left:1023px;top:677px;width:270px;height:25px"></div>
<div class="t" style="left:1055px;top:681px;color:#555;word-spacing:10.3px">- - - -</div>
<div class="btn" style="left:1304px;top:676px;width:204px;height:26px"><span class="a" style="left:11px;top:4px">Перейти по идентификатору</span></div>

<!-- red highlight row -->
<div class="a" style="left:15px;top:380px;width:1015px;height:28px;border:2px solid #ff0000"></div>
</body></html>
